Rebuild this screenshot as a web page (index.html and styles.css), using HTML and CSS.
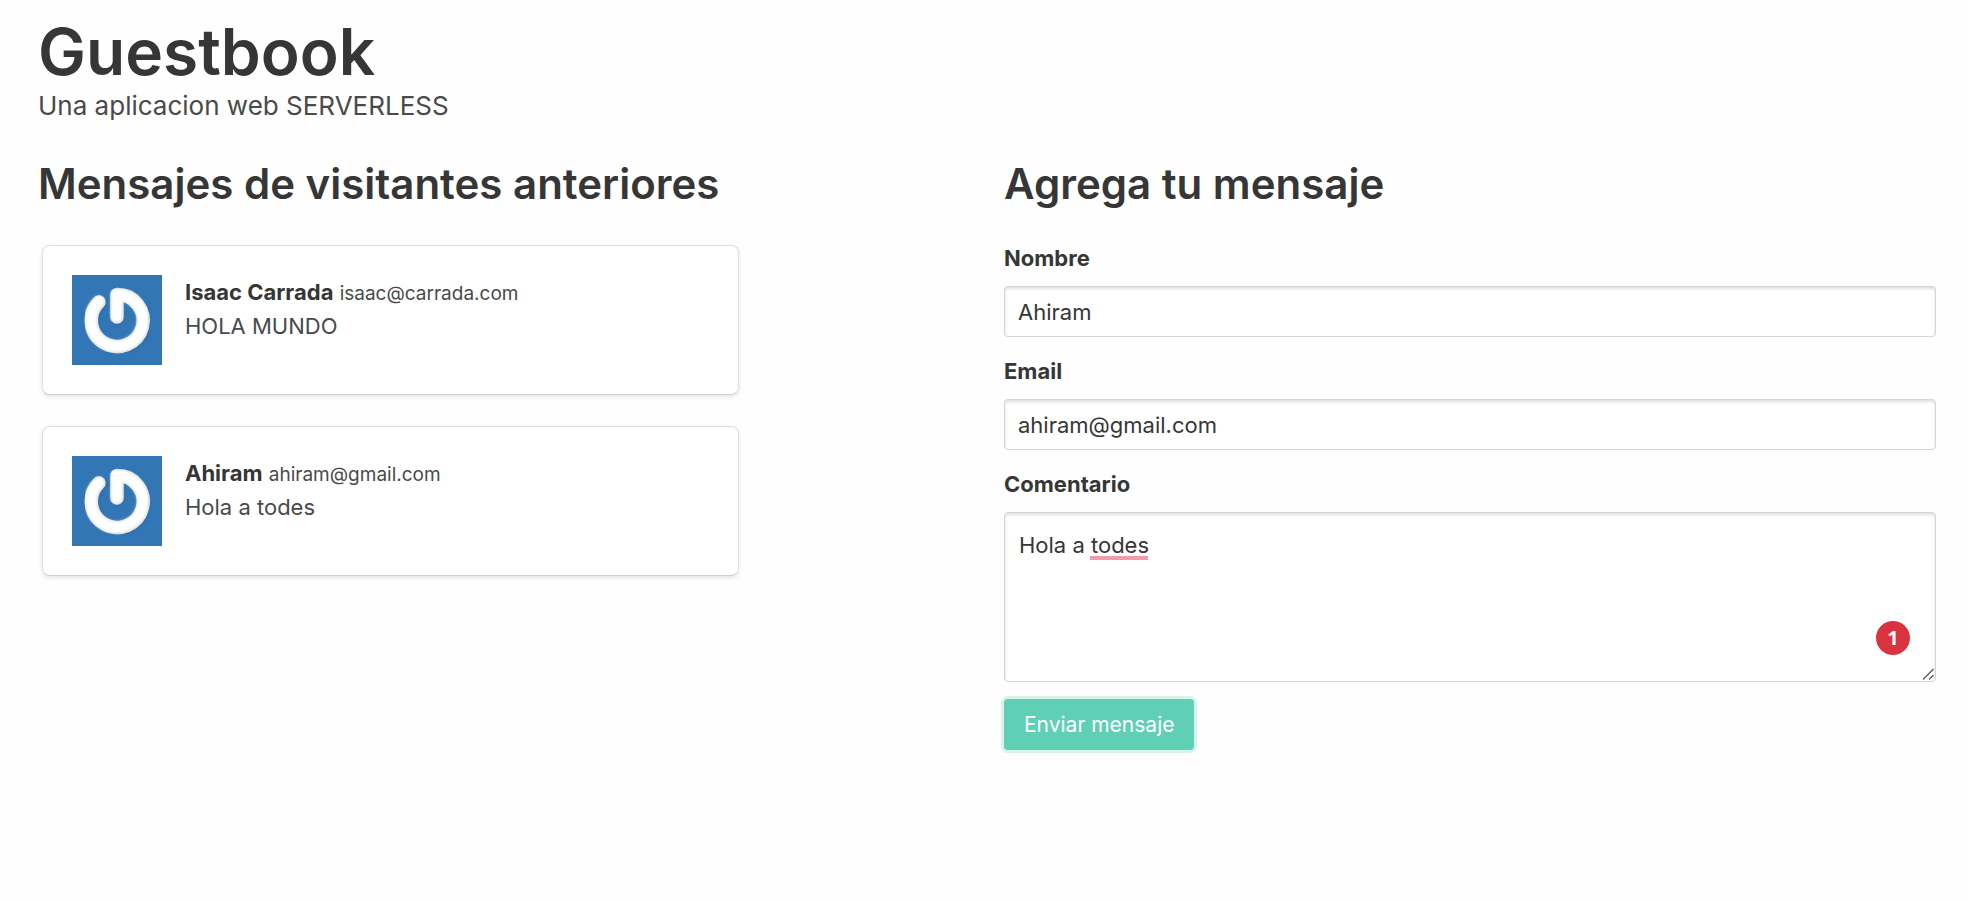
FILE: index.html
```html
<!DOCTYPE html>
<html lang="es">
<head>
  <meta charset="utf-8">
  <meta name="viewport" content="width=device-width, initial-scale=1">
  <title>Guestbook</title>
  <link rel="stylesheet" href="styles.css">
</head>
<body>
  <svg class="defs" aria-hidden="true">
    <defs>
      <filter id="soft-edge" x="-10%" y="-10%" width="120%" height="120%">
        <feGaussianBlur stdDeviation="1.6"/>
      </filter>
      <symbol id="avatar" viewBox="0 0 90 90">
        <rect width="90" height="90" fill="#3276b5"/>
        <g fill="none" stroke-linecap="round" stroke-linejoin="round">
          <g stroke="#1f5c96" stroke-width="13" opacity=".6" filter="url(#soft-edge)">
            <path d="M28 27.500A26 26 0 1 0 45.500 20V43"/>
          </g>
          <path d="M27 27A26 26 0 1 0 45 19.500V42" stroke="#dfe0e2" stroke-width="13.400"/>
          <path d="M26.600 26.600A26 26 0 1 0 44.600 19.200V41.500" stroke="#fff" stroke-width="11" filter="url(#soft-edge)"/>
          <path d="M26.800 26.800A26 26 0 1 0 44.800 19.400V41.500" stroke="#fff" stroke-width="8"/>
        </g>
      </symbol>
    </defs>
  </svg>
  <header class="masthead">
    <h1 class="title">Guestbook</h1>
    <p class="subtitle">Una aplicacion web SERVERLESS</p>
  </header>
  <main class="columns">
    <section>
      <h2 class="heading">Mensajes de visitantes anteriores</h2>
      <div class="messages">
        <article class="box">
          <svg class="avatar" role="img" aria-label="Avatar"><use href="#avatar"/></svg>
          <div class="content">
            <p><strong>Isaac Carrada</strong> <small>isaac@carrada.com</small></p>
            <p>HOLA MUNDO</p>
          </div>
        </article>
        <article class="box">
          <svg class="avatar" role="img" aria-label="Avatar"><use href="#avatar"/></svg>
          <div class="content">
            <p><strong>Ahiram</strong> <small>ahiram@gmail.com</small></p>
            <p>Hola a todes</p>
          </div>
        </article>
      </div>
    </section>
    <section>
      <h2 class="heading">Agrega tu mensaje</h2>
      <form class="form">
        <div class="field">
          <label for="name">Nombre</label>
          <input class="input" id="name" type="text" value="Ahiram">
        </div>
        <div class="field">
          <label for="email">Email</label>
          <input class="input" id="email" type="email" value="ahiram@gmail.com">
        </div>
        <div class="field">
          <label for="comment">Comentario</label>
          <div class="control">
            <textarea class="input textarea" id="comment" spellcheck="false">Hola a todes</textarea>
            <span class="spelling"></span>
            <span class="badge">1</span>
            <svg class="grip" viewBox="0 0 12 12" aria-hidden="true">
              <path d="M1 11.500L11.500 1M7 11.500L11.500 7" fill="none" stroke="#555" stroke-width="1.200"/>
            </svg>
          </div>
        </div>
        <button class="button" type="button">Enviar mensaje</button>
      </form>
    </section>
  </main>
</body>
</html>
```
FILE: styles.css
```css
* {
  box-sizing: border-box;
}

body {
  margin: 0;
  padding: 16px 32px 32px 38px;
  background: #fefefe;
  color: #4a4a4a;
  font-family: Inter, "Liberation Sans", sans-serif;
  font-size: 22px;
  line-height: 34px;
}

h1, h2, p {
  margin: 0;
}

.defs {
  position: absolute;
  width: 0;
  height: 0;
}

.title {
  color: #363636;
  font-size: 64px;
  font-weight: 600;
  line-height: 71px;
}

.subtitle {
  font-size: 26px;
  line-height: 38px;
}

.columns {
  display: grid;
  grid-template-columns: 1fr 1fr;
  gap: 34px;
  margin-top: 33px;
}

.heading {
  margin-bottom: 32px;
  color: #363636;
  font-size: 42px;
  font-weight: 600;
  line-height: 51px;
}

.messages {
  display: grid;
  gap: 31px;
  width: calc(75% - 2px);
  margin-left: 4px;
  padding-top: 4px;
}

.box {
  display: flex;
  gap: 23px;
  padding: 29px;
  border: 1px solid #dfdfdf;
  border-bottom-color: #cfcfcf;
  border-radius: 8px;
  background: #fff;
  box-shadow: 0 2px 4px rgba(10, 10, 10, .1);
}

.avatar {
  flex: none;
  width: 90px;
  height: 90px;
}

.content {
  padding-top: 1px;
  line-height: 33px;
}

.content strong {
  color: #363636;
  font-weight: 700;
}

.content small {
  font-size: 19px;
}

.form label {
  display: block;
  margin-bottom: 11px;
  color: #363636;
  font-weight: 700;
}

.field {
  margin-bottom: 17px;
}

.input {
  display: block;
  width: 100%;
  height: 51px;
  margin: 0;
  padding: 0 13px;
  border: 1px solid #d4d4d4;
  border-radius: 4px;
  outline: 0;
  background: #fff;
  box-shadow: inset 0 2px 3px rgba(10, 10, 10, .12);
  color: #363636;
  font: inherit;
}

.textarea {
  height: 170px;
  padding: 15px 14px;
  resize: vertical;
}

.control {
  position: relative;
}

.spelling {
  position: absolute;
  top: 44px;
  left: 86px;
  width: 58px;
  height: 4px;
  background: #f29cab;
}

.badge {
  position: absolute;
  right: 26px;
  bottom: 27px;
  width: 34px;
  height: 34px;
  border-radius: 50%;
  background: #da3340;
  color: #fff;
  font-family: "Open Sans", sans-serif;
  font-size: 20px;
  font-weight: 700;
  text-align: center;
}

.grip {
  position: absolute;
  right: 2px;
  bottom: 2px;
  width: 12px;
  height: 12px;
  background: #fff;
  pointer-events: none;
}

.button {
  display: block;
  height: 51px;
  padding: 0 20px;
  border: 0;
  border-radius: 4px;
  background: #5fcfb5;
  box-shadow: 0 0 0 3px #d7f3ec;
  color: #fff;
  font: inherit;
  font-size: 21px;
}
```
